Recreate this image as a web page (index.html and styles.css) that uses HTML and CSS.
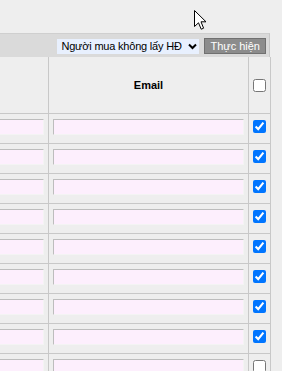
FILE: index.html
```html
<!DOCTYPE html>
<html lang="vi">
<head>
    <meta charset="UTF-8">
    <title>Danh sách hóa đơn</title>
    <link rel="stylesheet" href="styles.css">
</head>
<body>
    <div class="page">
        <div class="grid-wrap">
            <div class="toolbar">
                <label class="picker">
                    <select class="action-select">
                        <option>Người mua không lấy HĐ</option>
                        <option>Người mua lấy HĐ</option>
                    </select>
                    <svg class="chevron" width="9" height="7" viewBox="0 0 9 7">
                        <path d="M1 1.5 L4.5 5 L8 1.5" fill="none" stroke="#000" stroke-width="2"/>
                    </svg>
                </label>
                <button class="run-button">Thực hiện</button>
            </div>
            <table class="buyer-table">
                <colgroup>
                    <col class="col-name">
                    <col class="col-email">
                    <col class="col-check">
                </colgroup>
                <thead>
                    <tr>
                        <th></th>
                        <th>Email</th>
                        <th><input type="checkbox"></th>
                    </tr>
                </thead>
                <tbody>
                    <tr><td><input class="field" type="text"></td><td><input class="field" type="text"></td><td><input type="checkbox" checked></td></tr>
                    <tr><td><input class="field" type="text"></td><td><input class="field" type="text"></td><td><input type="checkbox" checked></td></tr>
                    <tr><td><input class="field" type="text"></td><td><input class="field" type="text"></td><td><input type="checkbox" checked></td></tr>
                    <tr><td><input class="field" type="text"></td><td><input class="field" type="text"></td><td><input type="checkbox" checked></td></tr>
                    <tr><td><input class="field" type="text"></td><td><input class="field" type="text"></td><td><input type="checkbox" checked></td></tr>
                    <tr><td><input class="field" type="text"></td><td><input class="field" type="text"></td><td><input type="checkbox" checked></td></tr>
                    <tr><td><input class="field" type="text"></td><td><input class="field" type="text"></td><td><input type="checkbox" checked></td></tr>
                    <tr><td><input class="field" type="text"></td><td><input class="field" type="text"></td><td><input type="checkbox" checked></td></tr>
                    <tr><td><input class="field" type="text"></td><td><input class="field" type="text"></td><td><input type="checkbox"></td></tr>
                </tbody>
            </table>
        </div>
    </div>
    <svg class="mouse-cursor" width="13" height="21" viewBox="0 0 13 21">
        <path d="M0.5 0.5 L0.5 16.5 L4.5 12.8 L7.2 19.2 L9.6 18.2 L7 11.8 L12 11.8 Z" fill="#fff" stroke="#000" stroke-width="1"/>
    </svg>
</body>
</html>
```

FILE: styles.css
```css
body {
    margin: 0;
    background-color: #eeeeee;
    font-family: "Liberation Sans", Arial, sans-serif;
    font-size: 11px;
    color: #000;
    overflow: hidden;
}

.page {
    padding-top: 33px;
}

.grid-wrap {
    width: 330px;
    margin-left: -60px;
}

.toolbar {
    height: 23px;
    background: #dadada;
    border-top: 1px solid #cfcfcf;
    border-right: 1px solid #c8c8c8;
    display: flex;
    justify-content: flex-end;
    align-items: center;
    gap: 5px;
    padding-right: 3px;
}

.picker {
    display: flex;
    align-items: center;
    height: 15px;
    background: #e8f0fe;
    padding: 0 2px 0 4px;
    margin-top: 1px;
}

.action-select {
    appearance: none;
    -webkit-appearance: none;
    border: none;
    background: transparent;
    font-family: "Liberation Sans", Arial, sans-serif;
    font-size: 11px;
    letter-spacing: -0.2px;
    padding: 0;
    margin: 0;
    color: #000;
}

.chevron {
    margin-left: 6px;
}

.run-button {
    height: 16px;
    padding: 0 5px;
    background: #8c8c8c;
    border: 1px solid #707070;
    color: #fff;
    font-family: "Liberation Sans", Arial, sans-serif;
    font-size: 11px;
    line-height: 14px;
}

.buyer-table {
    width: 330px;
    table-layout: fixed;
    border-collapse: collapse;
}

.col-name {
    width: 108px;
}

.col-email {
    width: 200px;
}

.col-check {
    width: 22px;
}

.buyer-table th,
.buyer-table td {
    border: 1px solid #c8c8c8;
    padding: 0;
}

.buyer-table thead th {
    border-top: none;
    height: 56px;
    font-size: 11px;
    font-weight: bold;
    text-align: center;
    vertical-align: middle;
}

.buyer-table td {
    height: 29px;
    padding: 0 4px;
    vertical-align: top;
}

.buyer-table td:last-child {
    padding: 0;
    text-align: center;
}

.field {
    display: block;
    box-sizing: border-box;
    width: 100%;
    height: 16px;
    margin-top: 5px;
    border: 1px solid;
    border-color: #bdbdbd #f4f4f4 #f4f4f4 #bdbdbd;
    background: #fdeffd;
    padding: 0;
}

.buyer-table input[type="checkbox"] {
    width: 13px;
    height: 13px;
    margin: 0;
    vertical-align: middle;
}

.buyer-table td input[type="checkbox"] {
    margin-top: 6px;
}

.mouse-cursor {
    position: absolute;
    left: 194px;
    top: 10px;
}
```
